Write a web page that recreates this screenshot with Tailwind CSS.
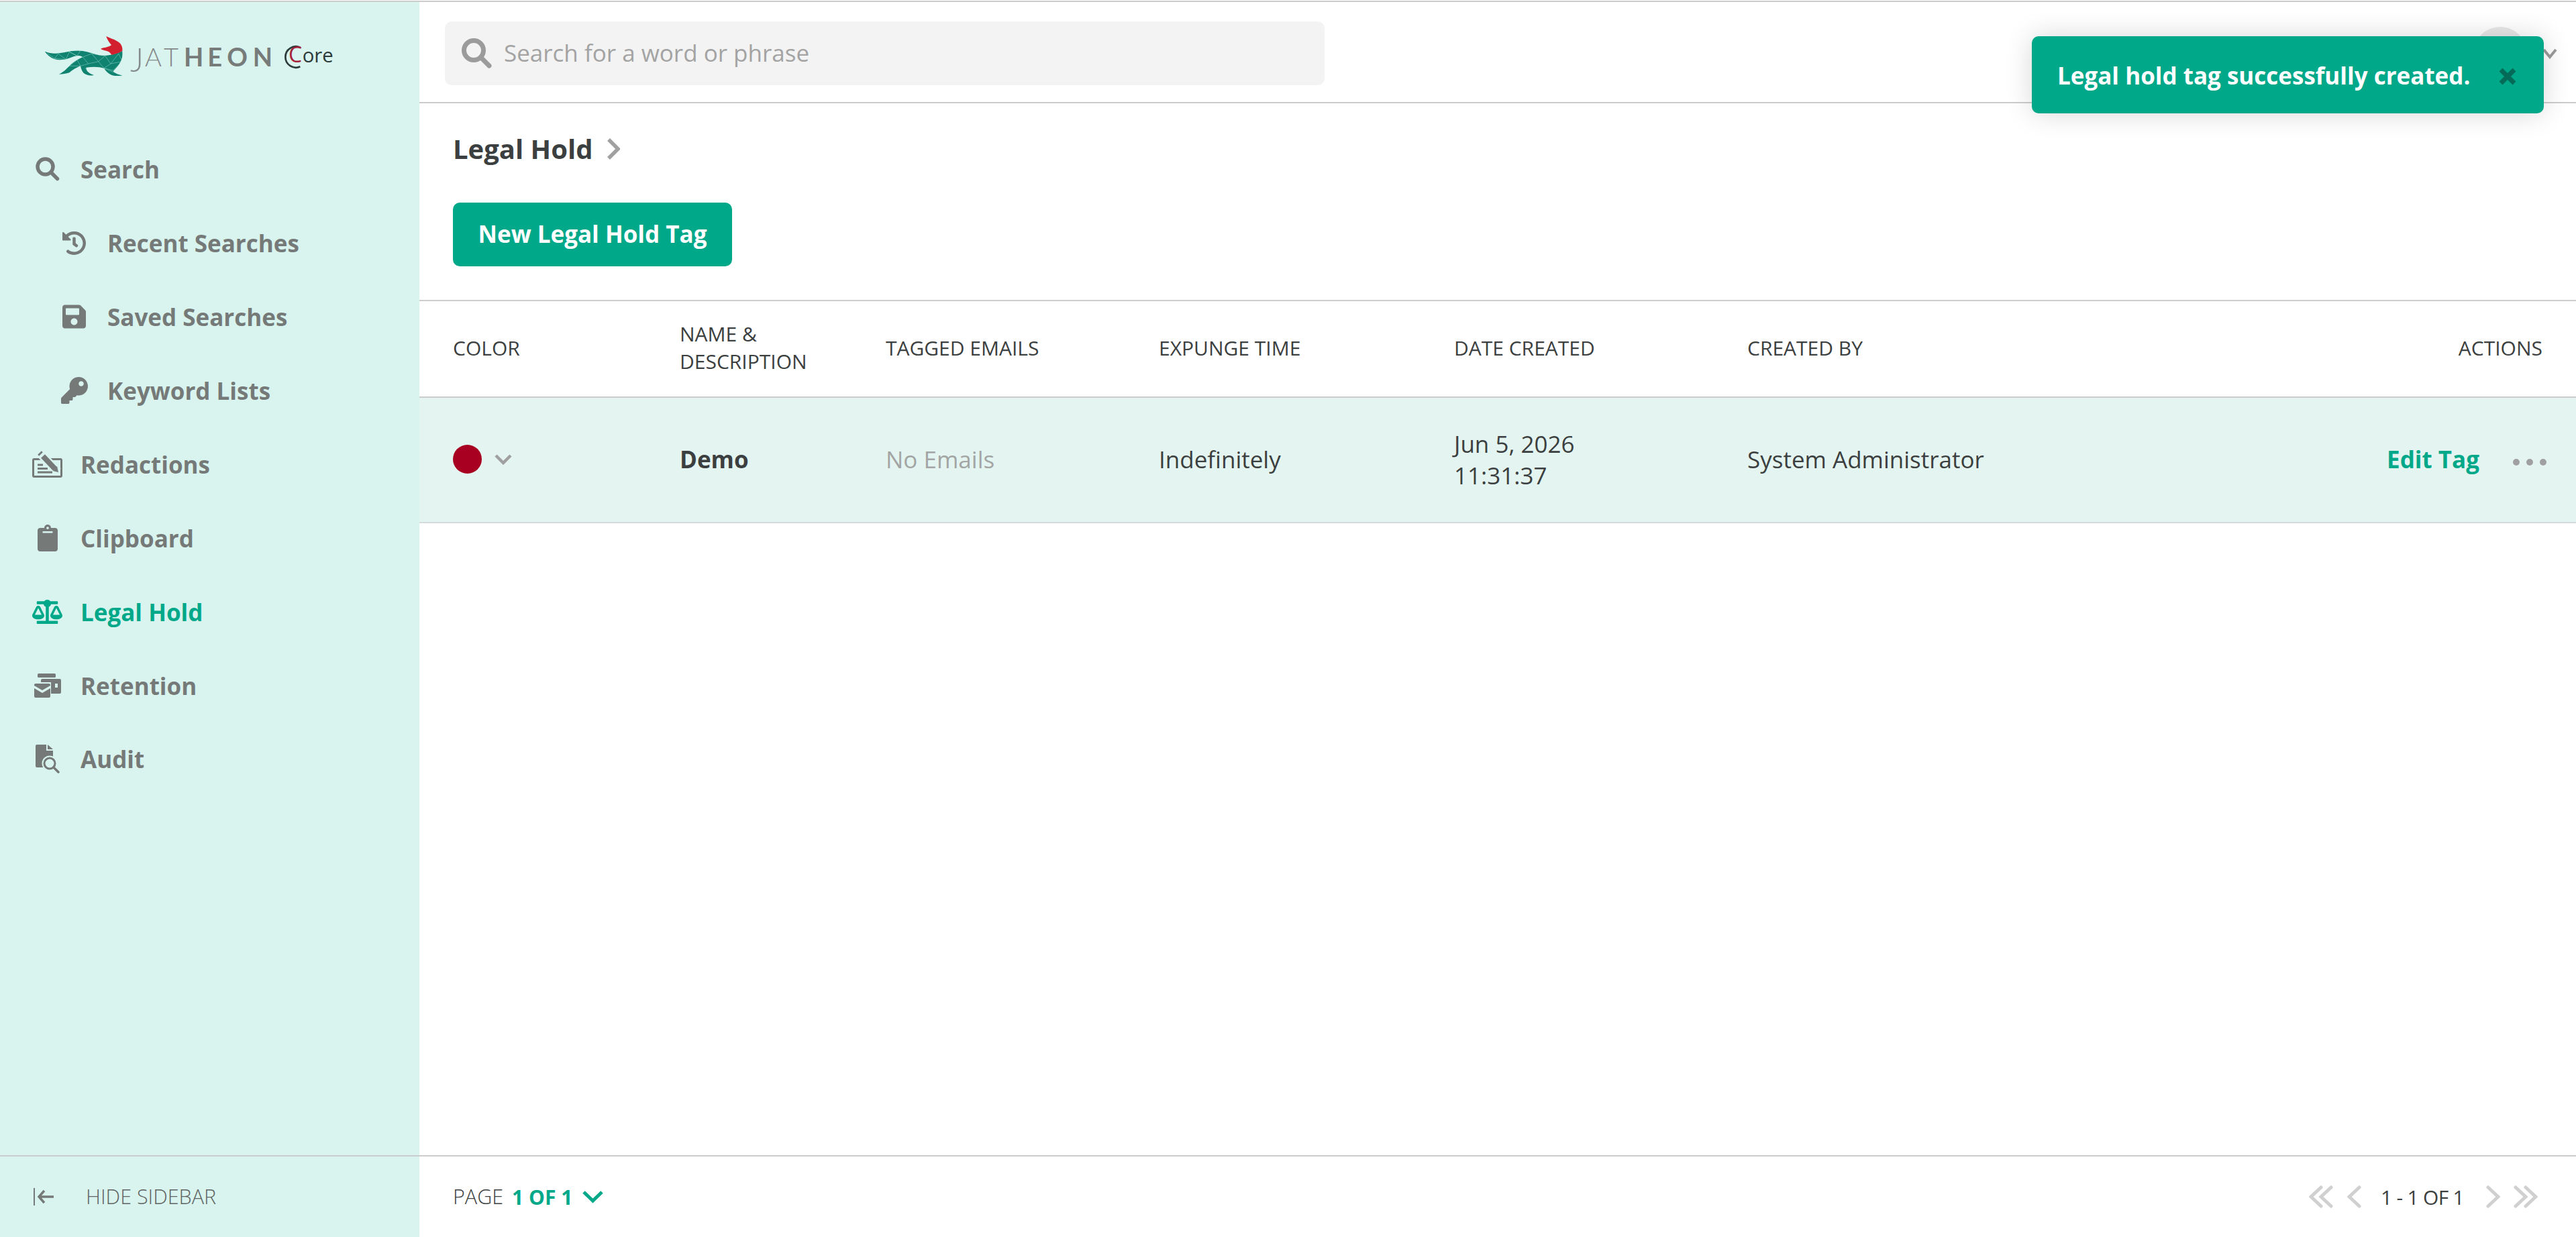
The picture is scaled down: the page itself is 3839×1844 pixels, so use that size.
<!DOCTYPE html>
<html lang="en">
<head>
  <meta charset="UTF-8">
  <title>Legal Hold</title>
  <script src="https://cdn.jsdelivr.net/npm/@tailwindcss/browser@4"></script>
</head>
<body class="bg-white font-['Open_Sans',sans-serif] text-[#3c3f3f] overflow-hidden">
  <div class="relative w-[3839px] h-[1844px] pt-px flex flex-col">
    <div class="h-[2px] bg-[#cccccc] shrink-0"></div>
    <div class="flex-1 flex min-h-0">

      <!-- sidebar -->
      <aside class="w-[625px] shrink-0 bg-[#d9f4ef] flex flex-col">
        <div class="h-[194px] pl-[40px] pt-[27px] shrink-0">
          <svg width="480" height="110" viewBox="0 0 1440 330" class="block">
            <defs>
              <clipPath id="fox">
                <path d="M80 140 C105 150 130 152 165 145 C195 138 225 134 250 138 C280 143 305 155 335 158 C365 160 400 152 427 138 C430 160 425 180 408 203 C398 216 388 224 386 230 C398 240 412 243 427 248 C410 251 392 250 378 245 C362 238 352 225 345 215 C325 208 295 207 265 212 C265 225 272 235 300 246 C282 250 262 246 252 235 C245 225 242 215 240 205 C225 210 205 222 190 235 C175 240 160 242 143 242 C165 232 180 215 195 200 C210 185 230 175 250 165 C235 155 220 158 195 168 C170 178 145 180 125 175 C105 168 90 155 80 140 Z"/>
              </clipPath>
            </defs>
            <g clip-path="url(#fox)">
              <rect x="70" y="125" width="370" height="135" fill="#0f8270"/>
              <path d="M90 148 L125 172 L140 150 L175 175 L190 142 L225 160 L240 135 M125 172 L175 175 M225 160 L190 142 M250 165 L290 150 L320 185 L350 160 L375 195 L410 150 L427 185 L385 225 M250 165 L275 195 L320 185 L345 215 L375 195 M290 150 L350 160 M190 205 L240 205 L275 195 M190 205 L225 178 L240 205 M143 242 L190 205 M345 215 L385 225 M260 215 L300 245 M345 215 L425 248 M375 195 L427 185" fill="none" stroke="#8fd6c8" stroke-width="1.6"/>
            </g>
            <path d="M355 72 C375 82 405 90 418 105 C427 118 428 128 427 138 C410 148 393 153 378 155 C373 145 368 140 355 137 C345 135 335 132 330 128 C345 122 365 122 378 112 C370 100 360 90 355 72 Z" fill="#d2202f"/>
            <text y="230" font-family="Lato, sans-serif" font-size="146" font-weight="300" fill="#85898a" x="462">J</text>
            <text y="207" font-family="Lato, sans-serif" font-size="114" font-weight="300" fill="#85898a" x="528 612">AT</text>
            <text y="207" font-family="Lato, sans-serif" font-size="114" font-weight="700" fill="#777c7b" x="702 808 895 1010">HEON</text>
            <path d="M1222 122 A47 47 0 1 0 1222 208" fill="none" stroke="#2d3a3a" stroke-width="8"/>
            <text y="190" font-family="'Open Sans', sans-serif" font-size="88" fill="#2d3a3a" x="1170"><tspan fill="#a52238" font-size="96">C</tspan><tspan x="1232">ore</tspan></text>
          </svg>
        </div>

        <nav class="flex-1 text-[35px] font-bold text-[#757a78] leading-none">
          <a class="h-[110px] flex items-center pl-[48px] gap-[27px]">
            <span class="w-[45px] flex justify-center">
              <svg width="36" height="36" viewBox="0 0 36 36" fill="none" stroke="#757a78" stroke-width="5.5"><circle cx="14.5" cy="14.5" r="11.5"/><path d="M23 23 L32.5 32.5" stroke-linecap="round"/></svg>
            </span>
            <span>Search</span>
          </a>
          <a class="h-[110px] flex items-center pl-[88px] gap-[27px]">
            <span class="w-[45px] flex justify-center">
              <svg width="35" height="35" viewBox="8 8 496 496" fill="#757a78"><path d="M504 255.531c.253 136.64-111.18 248.372-247.82 248.468-59.015.042-113.223-20.53-155.822-54.911-11.077-8.94-11.905-25.541-1.839-35.607l11.267-11.267c8.609-8.609 22.353-9.551 31.891-1.984C173.062 425.135 212.781 440 256 440c101.705 0 184-82.311 184-184 0-101.705-82.311-184-184-184-48.814 0-93.149 18.969-126.068 49.932l50.754 50.754c10.08 10.08 2.941 27.314-11.313 27.314H24c-8.837 0-16-7.163-16-16V38.627c0-14.254 17.234-21.393 27.314-11.314l49.372 49.372C129.209 34.136 189.552 8 256 8c136.81 0 247.747 110.78 248 247.531zm-180.912 78.784l9.823-12.63c8.138-10.463 6.253-25.542-4.21-33.679L288 256.349V152c0-13.255-10.745-24-24-24h-16c-13.255 0-24 10.745-24 24v135.651l65.409 50.874c10.463 8.137 25.541 6.253 33.679-4.21z"/></svg>
            </span>
            <span>Recent Searches</span>
          </a>
          <a class="h-[110px] flex items-center pl-[88px] gap-[27px]">
            <span class="w-[45px] flex justify-center">
              <svg width="35" height="36" viewBox="0 32 448 448" fill="#757a78"><path d="M433.941 129.941l-83.882-83.882A48 48 0 0 0 316.118 32H48C21.49 32 0 53.49 0 80v352c0 26.51 21.49 48 48 48h352c26.51 0 48-21.49 48-48V163.882a48 48 0 0 0-14.059-33.941zM224 416c-35.346 0-64-28.654-64-64 0-35.346 28.654-64 64-64s64 28.654 64 64c0 35.346-28.654 64-64 64zm96-304.52V212c0 6.627-5.373 12-12 12H76c-6.627 0-12-5.373-12-12V108c0-6.627 5.373-12 12-12h228.52c3.183 0 6.235 1.264 8.485 3.515l3.48 3.48A11.996 11.996 0 0 1 320 111.48z"/></svg>
            </span>
            <span>Saved Searches</span>
          </a>
          <a class="h-[110px] flex items-center pl-[88px] gap-[27px]">
            <span class="w-[45px] flex justify-center">
              <svg width="40" height="40" viewBox="0 0 512 512" fill="#757a78"><path d="M512 176.001C512 273.203 433.202 352 336 352c-11.22 0-22.19-1.062-32.827-3.069l-24.012 27.014A23.999 23.999 0 0 1 261.223 384H224v40c0 13.255-10.745 24-24 24h-40v40c0 13.255-10.745 24-24 24H24c-13.255 0-24-10.745-24-24v-78.059c0-6.365 2.529-12.47 7.029-16.971l161.802-161.802C163.108 213.814 160 195.271 160 176 160 78.798 238.797.001 335.999 0 433.488-.001 512 78.511 512 176.001zM336 128c0 26.51 21.49 48 48 48s48-21.49 48-48-21.49-48-48-48-48 21.49-48 48z"/></svg>
            </span>
            <span>Keyword Lists</span>
          </a>
          <a class="h-[110px] flex items-center pl-[48px] gap-[27px]">
            <span class="w-[45px] flex justify-center">
              <svg width="45" height="40" viewBox="0 0 45 40" fill="none">
                <rect x="1.5" y="12.5" width="42" height="26" rx="1.5" stroke="#757a78" stroke-width="3"/>
                <path d="M11 3 L38 31" stroke="#d9f4ef" stroke-width="13"/>
                <path d="M11 3 L13 5" stroke="#757a78" stroke-width="8"/>
                <path d="M16 8 L34 27" stroke="#757a78" stroke-width="8"/>
                <path d="M31 30 L39 32 L37 23 Z" fill="#757a78"/>
                <path d="M8 21 H16 M8 26.5 H23 M8 32 H30" stroke="#757a78" stroke-width="3"/>
              </svg>
            </span>
            <span>Redactions</span>
          </a>
          <a class="h-[110px] flex items-center pl-[48px] gap-[27px]">
            <span class="w-[45px] flex justify-center">
              <svg width="30" height="40" viewBox="0 0 384 512" fill="#757a78"><path d="M384 112v352c0 26.51-21.49 48-48 48H48c-26.51 0-48-21.49-48-48V112c0-26.51 21.49-48 48-48h80c0-35.29 28.71-64 64-64s64 28.71 64 64h80c26.51 0 48 21.49 48 48zM192 40c-13.255 0-24 10.745-24 24s10.745 24 24 24 24-10.745 24-24-10.745-24-24-24m96 114v-20a6 6 0 0 0-6-6H102a6 6 0 0 0-6 6v20a6 6 0 0 0 6 6h180a6 6 0 0 0 6-6z"/></svg>
            </span>
            <span>Clipboard</span>
          </a>
          <a class="h-[110px] flex items-center pl-[48px] gap-[27px] text-[#00a88a]">
            <span class="w-[45px] flex justify-center">
              <svg width="45" height="36" viewBox="0 0 640 512" fill="#00a88a"><path d="M256 336h-.02c0-16.18 1.34-8.73-85.05-181.51-17.65-35.29-68.19-35.36-85.87 0C-2.06 328.75.02 320.33.02 336H0c0 44.18 57.31 80 128 80s128-35.82 128-80zM128 176l72 144H56l72-144zm511.98 160c0-16.18 1.34-8.73-85.05-181.51-17.65-35.29-68.19-35.36-85.87 0-87.12 174.26-85.04 165.84-85.04 181.51H384c0 44.18 57.31 80 128 80s128-35.82 128-80h-.02zM440 320l72-144 72 144H440zm88 128H352V153.25c23.51-10.29 41.16-31.48 46.39-57.25H528c8.84 0 16-7.16 16-16V48c0-8.84-7.16-16-16-16H383.64C369.04 12.68 346.09 0 320 0s-49.04 12.68-63.64 32H112c-8.84 0-16 7.16-16 16v32c0 8.84 7.16 16 16 16h129.61c5.23 25.76 22.87 46.96 46.39 57.25V448H112c-8.84 0-16 7.16-16 16v32c0 8.84 7.16 16 16 16h416c8.84 0 16-7.16 16-16v-32c0-8.84-7.16-16-16-16z"/></svg>
            </span>
            <span>Legal Hold</span>
          </a>
          <a class="h-[110px] flex items-center pl-[48px] gap-[27px]">
            <span class="w-[45px] flex justify-center">
              <svg width="40" height="36" viewBox="0 0 40 36" fill="#757a78">
                <rect x="5" y="0" width="27" height="6" rx="1.5"/>
                <rect x="10" y="8" width="30" height="22" rx="2"/>
                <rect x="31" y="15" width="4" height="6" fill="#d9f4ef"/>
                <rect x="-1" y="13" width="26" height="25" fill="#d9f4ef"/>
                <path d="M2 15 H22 a2 2 0 0 1 2 2 V18 L12 25 L0 18 V17 a2 2 0 0 1 2 -2 Z"/>
                <path d="M0 22 L12 29 L24 22 V34 a2 2 0 0 1 -2 2 H2 a2 2 0 0 1 -2 -2 Z"/>
              </svg>
            </span>
            <span>Retention</span>
          </a>
          <a class="h-[108px] flex items-center pl-[48px] gap-[27px]">
            <span class="w-[45px] flex justify-center">
              <svg width="36" height="43" viewBox="0 0 36 43" fill="#757a78">
                <path d="M2 0 H16 V9 H26 V34 H2 a2 2 0 0 1 -2 -2 V2 a2 2 0 0 1 2 -2 Z"/>
                <path d="M18 0 L26 7 H18 Z"/>
                <circle cx="21" cy="28" r="11.5" fill="#d9f4ef"/>
                <circle cx="21" cy="28" r="8" fill="#d9f4ef" stroke="#757a78" stroke-width="3"/>
                <path d="M27 34 L34 41" stroke="#757a78" stroke-width="3.5" stroke-linecap="round"/>
              </svg>
            </span>
            <span>Audit</span>
          </a>
        </nav>

        <div class="h-[122px] shrink-0 border-t-2 border-[#cccccc] flex items-center pl-[50px] text-[30.5px] font-light text-[#5f6462]">
          <svg width="31" height="26" viewBox="0 0 31 26" fill="none" stroke="#757a78" class="mr-[47px]">
            <path d="M1 0 V26" stroke-width="2"/>
            <path d="M30 13 H8 M16 4 L8 13 L16 22" stroke-width="3.5"/>
          </svg>
          <span>HIDE SIDEBAR</span>
        </div>
      </aside>

      <!-- main -->
      <main class="flex-1 flex flex-col min-w-0">
        <header class="h-[151px] shrink-0 border-b-2 border-[#cccccc] flex items-center pl-[38px] pr-[28px] pt-[4px]">
          <div class="w-[1311px] h-[95px] bg-[#f3f3f3] rounded-[10px] flex items-center pl-[25px] gap-[18px]">
            <svg width="45" height="45" viewBox="0 0 45 45" fill="none" stroke="#9b9b9b" stroke-width="7"><circle cx="18" cy="18" r="14.5"/><path d="M29 29 L41 41" stroke-linecap="round"/></svg>
            <span class="text-[35px] text-[#a3a3a3]">Search for a word or phrase</span>
          </div>
          <div class="ml-auto flex items-center">
            <div class="w-[52px] h-[52px] rounded-full bg-[#00a88a] mr-[333px]"></div>
            <div class="w-[80px] h-[80px] rounded-full bg-[#e8e8e8] mr-[23px]"></div>
            <svg width="22" height="16" viewBox="0 0 22 16" fill="none" stroke="#9b9b9b" stroke-width="4"><path d="M2 2 L11 13 L20 2"/></svg>
          </div>
        </header>

        <div class="h-[295px] shrink-0 border-b-2 border-[#cccccc] pl-[50px] pt-[44px]">
          <div class="h-[48px] flex items-center gap-[21px]">
            <h1 class="text-[40px] font-bold leading-none">Legal Hold</h1>
            <svg width="20" height="32" viewBox="0 0 20 32" fill="none" stroke="#a0a0a0" stroke-width="5.5"><path d="M3 2 L17 16 L3 30"/></svg>
          </div>
          <button class="mt-[56px] w-[416px] h-[95px] rounded-[10px] bg-[#00a88a] text-white text-[35px] font-bold flex items-center justify-center">New Legal Hold Tag</button>
        </div>

        <div class="h-[144px] shrink-0 border-b-2 border-[#cccccc] grid grid-cols-[338px_307px_407px_440px_437px_1fr] items-center pl-[50px] pr-[50px] pb-[4px] text-[30px] leading-[41px]">
          <div>COLOR</div>
          <div>NAME &amp;<br>DESCRIPTION</div>
          <div>TAGGED EMAILS</div>
          <div>EXPUNGE TIME</div>
          <div>DATE CREATED</div>
          <div class="flex justify-between">
            <span>CREATED BY</span>
            <span>ACTIONS</span>
          </div>
        </div>

        <div class="h-[187px] shrink-0 border-b-2 border-[#d3dcda] bg-[#e4f5f1] grid grid-cols-[339px_307px_407px_440px_437px_1fr] items-center pl-[49px] pr-[44px] pb-[2px] text-[35px] leading-[47px]">
          <div class="flex items-center gap-[19px] pl-px">
            <span class="w-[43px] h-[43px] rounded-full bg-[#a80020]"></span>
            <svg width="26" height="16" viewBox="0 0 26 16" fill="none" stroke="#a0a0a0" stroke-width="4.5"><path d="M2 2 L13 13 L24 2"/></svg>
          </div>
          <div class="font-bold">Demo</div>
          <div class="text-[#a3a5a4]">No Emails</div>
          <div>Indefinitely</div>
          <div>Jun 5, 2026<br>11:31:37</div>
          <div class="flex items-center">
            <span>System Administrator</span>
            <span class="ml-auto font-bold text-[#00a88a]">Edit Tag</span>
            <span class="ml-[50px] mt-[8px] flex gap-[10px]">
              <i class="w-[10px] h-[10px] rounded-full bg-[#a0a0a2]"></i>
              <i class="w-[10px] h-[10px] rounded-full bg-[#a0a0a2]"></i>
              <i class="w-[10px] h-[10px] rounded-full bg-[#a0a0a2]"></i>
            </span>
          </div>
        </div>

        <div class="flex-1"></div>

        <footer class="h-[122px] shrink-0 border-t-2 border-[#cccccc] flex items-center pl-[50px] pr-[57px] text-[30px]">
          <span class="font-light text-[30.5px]">PAGE</span>
          <span class="ml-[13px] font-bold text-[#00a88a]">1 OF 1</span>
          <svg width="31" height="20" viewBox="0 0 31 20" fill="none" stroke="#00a88a" stroke-width="5" class="ml-[15px]"><path d="M2 3 L15.5 16 L29 3"/></svg>
          <div class="ml-auto flex items-center">
            <svg width="36" height="34" viewBox="0 0 36 34" fill="none" stroke="#d0d0d0" stroke-width="5" stroke-linecap="round"><path d="M18 3 L3 17 L18 31 M33 3 L18 17 L33 31"/></svg>
            <svg width="21" height="34" viewBox="0 0 21 34" fill="none" stroke="#d0d0d0" stroke-width="5" stroke-linecap="round" class="ml-[21px]"><path d="M18 3 L3 17 L18 31"/></svg>
            <span class="ml-[29px] tracking-[-0.7px]">1 - 1 OF 1</span>
            <svg width="21" height="34" viewBox="0 0 21 34" fill="none" stroke="#d0d0d0" stroke-width="5" stroke-linecap="round" class="ml-[33px]"><path d="M3 3 L18 17 L3 31"/></svg>
            <svg width="36" height="34" viewBox="0 0 36 34" fill="none" stroke="#d0d0d0" stroke-width="5" stroke-linecap="round" class="ml-[20px]"><path d="M3 3 L18 17 L3 31 M18 3 L33 17 L18 31"/></svg>
          </div>
        </footer>
      </main>
    </div>

    <!-- toast -->
    <div class="absolute top-[54px] right-[48px] w-[763px] h-[115px] rounded-[10px] bg-[#00a88a] shadow-[0_0_40px_rgba(0,0,0,0.16)] flex items-center pl-[38px] pr-[41px] pt-[4px] text-white text-[35px] font-bold">
      <span>Legal hold tag successfully created.</span>
      <svg width="26" height="26" viewBox="0 0 26 26" fill="none" stroke="#046b58" stroke-width="7" class="ml-auto"><path d="M3 3 L23 23 M23 3 L3 23"/></svg>
    </div>
  </div>
</body>
</html>
